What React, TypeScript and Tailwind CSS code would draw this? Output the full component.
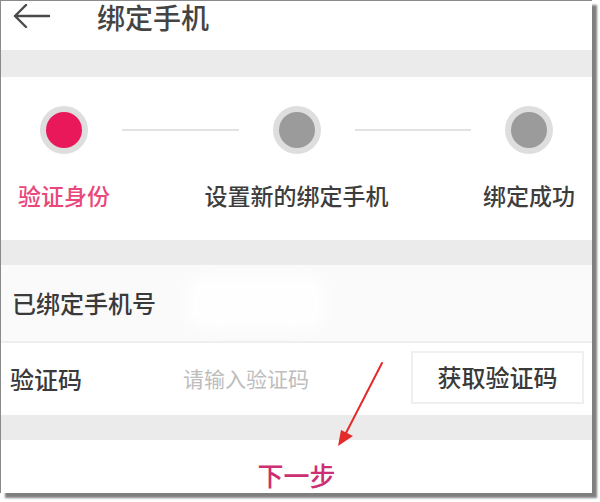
import React from "react";

const font = { fontFamily: '"Noto Sans CJK SC", "Noto Sans", sans-serif' };

type Step = { label: string; active: boolean };

const steps: Step[] = [
  { label: "验证身份", active: true },
  { label: "设置新的绑定手机", active: false },
  { label: "绑定成功", active: false },
];

function StepDot({ step }: { step: Step }) {
  return (
    <div className="flex w-[48px] shrink-0 flex-col items-center">
      <div className="flex h-[48px] w-[48px] items-center justify-center rounded-full bg-[#dedede]">
        <div
          className={`h-[36px] w-[36px] rounded-full ${step.active ? "bg-[#e8185a]" : "bg-[#9b9b9b]"}`}
        />
      </div>
      <p
        className={`mt-[26px] whitespace-nowrap text-[23px] font-medium leading-[30px] ${
          step.active ? "text-[#e9487b]" : "text-[#3d3d3d]"
        }`}
      >
        {step.label}
      </p>
    </div>
  );
}

function StepLine() {
  return <div className="mx-[34px] mt-[23px] h-[2px] flex-1 bg-[#e2e2e2]" />;
}

export default function App() {
  return (
    <div className="h-[502px] w-[600px] bg-white" style={font}>
      <div className="relative flex h-[493px] w-[592px] flex-col overflow-hidden border-l border-t border-[#8a8a8a] bg-white shadow-[5px_5px_2px_rgba(0,0,0,0.5)]">
        {/* header */}
        <div className="flex h-[49px] shrink-0 items-start">
          <div className="flex h-[32px] items-center">
            <svg className="ml-[12px] h-[26px] w-[38px]" viewBox="0 0 38 26" fill="none" stroke="#4a4a4a" strokeWidth={2.4} strokeLinecap="round" strokeLinejoin="round" aria-hidden>
              <path d="M36 12H2M13 1L2 12l11 11" />
            </svg>
            <h1 className="ml-[46px] text-[28px] font-medium leading-[32px] text-[#444]">绑定手机</h1>
          </div>
        </div>

        <div className="h-[27px] shrink-0 bg-[#ebebeb]" />

        {/* steps */}
        <div className="flex h-[163px] shrink-0 items-start px-[39px] pt-[29px]">
          <StepDot step={steps[0]} />
          <StepLine />
          <StepDot step={steps[1]} />
          <StepLine />
          <StepDot step={steps[2]} />
        </div>

        <div className="h-[25px] shrink-0 bg-[#ebebeb]" />

        {/* bound phone */}
        <div className="flex h-[76px] shrink-0 items-center bg-[#fafafa] pl-[11px]">
          <span className="text-[24px] font-medium text-[#3a3a3a]">已绑定手机号</span>
          <div className="ml-[30px] h-[56px] w-[140px] rounded-[20px] bg-[#fefefe] blur-[8px]" />
        </div>
        <div className="h-[2px] shrink-0 bg-[#eeeeee]" />

        {/* code */}
        <div className="flex h-[72px] shrink-0 items-center pl-[9px] pr-[8px]">
          <span className="w-[173px] text-[24px] font-medium text-[#3a3a3a]">验证码</span>
          <span className="flex-1 text-[21px] text-[#bdbdbd]">请输入验证码</span>
          <button
            type="button"
            className="-mt-[4px] flex h-[53px] w-[173px] items-center justify-center border-2 border-[#efefef] bg-white text-[24px] font-medium text-[#3a3a3a]"
          >
            获取验证码
          </button>
        </div>

        <div className="h-[25px] shrink-0 bg-[#ebebeb]" />

        <div className="flex flex-1 justify-center pt-[20px]">
          <span className="text-[26px] font-medium leading-[30px] text-[#cc2f74]">下一步</span>
        </div>

        {/* annotation arrow */}
        <svg className="absolute left-0 top-0 h-[493px] w-[592px]" viewBox="0 0 592 493" fill="none" aria-hidden>
          <path d="M381 362L345 432" stroke="#e32b2b" strokeWidth={2} strokeLinecap="round" />
          <path d="M337 445l3-16 12 6z" fill="#e32b2b" />
        </svg>
      </div>
    </div>
  );
}
